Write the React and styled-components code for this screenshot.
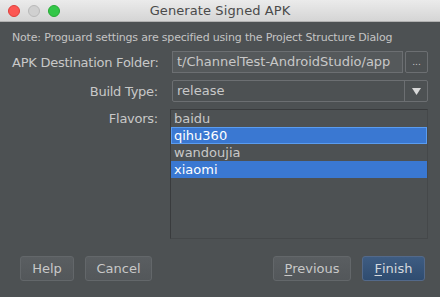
import styled, { createGlobalStyle } from 'styled-components';

const Global = createGlobalStyle`
  html, body { margin: 0; padding: 0; background: #4d5153; }
  body { font-family: "DejaVu Sans", "Noto Sans", sans-serif; }
`

const flavors = [
  { name: 'baidu', selected: false },
  { name: 'qihu360', selected: true, focused: true },
  { name: 'wandoujia', selected: false },
  { name: 'xiaomi', selected: true },
]

export default function App() {
  return (
    <>
      <Global />
      <Window>
        <TitleBar>
          <Lights>
            <Light color="#fc5753" border="#de3f3a" />
            <Light color="#d0d0d0" border="#b9b9b9" />
            <Light color="#33c748" border="#27aa35" />
          </Lights>
          <Title>Generate Signed APK</Title>
        </TitleBar>

        <Content>
          <Note>Note: Proguard settings are specified using the Project Structure Dialog</Note>

          <FormGrid>
            <Label>APK Destination Folder:</Label>
            <FieldRow>
              <TextField>t/ChannelTest-AndroidStudio/app</TextField>
              <BrowseBtn>...</BrowseBtn>
            </FieldRow>

            <Label>Build Type:</Label>
            <Combo>
              <ComboValue>release</ComboValue>
              <ComboArrow>
                <svg width="9" height="7" viewBox="0 0 9 7">
                  <path d="M0 0 L9 0 L4.5 7 Z" fill="#d8d8d8" />
                </svg>
              </ComboArrow>
            </Combo>

            <Label top>Flavors:</Label>
            <List>
              {flavors.map((f, i) => (
                <Item key={i} selected={f.selected} focused={f.focused}>{f.name}</Item>
              ))}
            </List>
          </FormGrid>
        </Content>

        <Footer>
          <Group>
            <Button width="52px">Help</Button>
            <Button width="65px">Cancel</Button>
          </Group>
          <Group>
            <Button width="76px"><u>P</u>revious</Button>
            <Button width="61px" primary><u>F</u>inish</Button>
          </Group>
        </Footer>
      </Window>
    </>
  )
}

const Window = styled.div`
  width: 440px;
  height: 297px;
  display: flex;
  flex-direction: column;
  background: #4d5153;
  overflow: hidden;
`

const TitleBar = styled.div`
  height: 21px;
  flex-shrink: 0;
  position: relative;
  display: flex;
  align-items: center;
  justify-content: center;
  background: linear-gradient(#ebebeb, #d5d5d5);
  border-bottom: 1px solid #b1b1b1;
`

const Lights = styled.div`
  position: absolute;
  left: 8px;
  top: 5px;
  display: flex;
  gap: 8px;
`

const Light = styled.span`
  width: 12px;
  height: 12px;
  box-sizing: border-box;
  border-radius: 50%;
  background: ${({color}) => color};
  border: 0.5px solid ${({border}) => border};
`

const Title = styled.div`
  font-size: 13px;
  color: #4a4a4a;
  letter-spacing: 0.1px;
`

const Content = styled.div`
  padding: 0 12px;
`

const Note = styled.div`
  margin-top: 8px;
  font-size: 11px;
  line-height: 15px;
  letter-spacing: -0.18px;
  color: #c4c4c4;
  white-space: nowrap;
`

const FormGrid = styled.div`
  margin-top: 6px;
  display: grid;
  grid-template-columns: 146px 1fr;
  column-gap: 12px;
  row-gap: 7px;
`

const Label = styled.div`
  font-size: 13px;
  letter-spacing: -0.25px;
  color: #c8c8c8;
  text-align: right;
  white-space: nowrap;
  align-self: ${({top}) => top ? 'start' : 'center'};
  line-height: ${({top}) => top ? '17px' : 'normal'};
  padding-top: ${({top}) => top ? '1px' : '0'};
`

const FieldRow = styled.div`
  display: flex;
  gap: 2px;
  padding-left: 2px;
`

const TextField = styled.div`
  flex: 1;
  height: 20px;
  border: 1px solid #6c6f72;
  background: #55595b;
  color: #c8c8c8;
  font-size: 13px;
  line-height: 20px;
  padding-left: 4px;
  white-space: nowrap;
  overflow: hidden;
`

const BrowseBtn = styled.div`
  width: 21px;
  height: 20px;
  border: 1px solid #6c6f72;
  border-radius: 2px;
  color: #c8c8c8;
  font-size: 9px;
  display: flex;
  align-items: center;
  justify-content: center;
`

const Combo = styled.div`
  margin-left: 2px;
  height: 20px;
  display: flex;
  border: 1px solid #6c6f72;
  border-radius: 2px;
`

const ComboValue = styled.div`
  flex: 1;
  font-size: 13px;
  color: #c8c8c8;
  line-height: 20px;
  padding-left: 4px;
`

const ComboArrow = styled.div`
  width: 22px;
  border-left: 1px solid #6c6f72;
  display: flex;
  align-items: center;
  justify-content: center;
`

const List = styled.div`
  height: 128px;
  border: 1px solid #393b3d;
  border-right-color: #45484a;
  border-bottom-color: #45484a;
`

const Item = styled.div`
  height: 17px;
  box-sizing: border-box;
  line-height: 15px;
  padding-left: 2px;
  font-size: 13px;
  color: ${({selected}) => selected ? '#ffffff' : '#c8c8c8'};
  background: ${({selected}) => selected ? '#3a78d2' : 'transparent'};
  border: 1px solid ${({focused}) => focused ? '#5a9cf0' : 'transparent'};
`

const Footer = styled.div`
  margin-top: 17px;
  padding: 0 15px 0 21px;
  display: flex;
  justify-content: space-between;
`

const Group = styled.div`
  display: flex;
  gap: 12px;
`

const Button = styled.div`
  width: ${({width}) => width};
  height: 23px;
  box-sizing: content-box;
  border: 1px solid ${({primary}) => primary ? '#53698a' : '#63676a'};
  border-radius: 3px;
  background: ${({primary}) => primary ? 'linear-gradient(#3e5c82, #2f4c70)' : 'linear-gradient(#5a5e61, #53575a)'};
  color: ${({primary}) => primary ? '#d4d8de' : '#c8c8c8'};
  font-size: 13px;
  display: flex;
  align-items: center;
  justify-content: center;
  margin-left: -1px;

  u { text-decoration-thickness: 1px; text-underline-offset: 2px; }
`
